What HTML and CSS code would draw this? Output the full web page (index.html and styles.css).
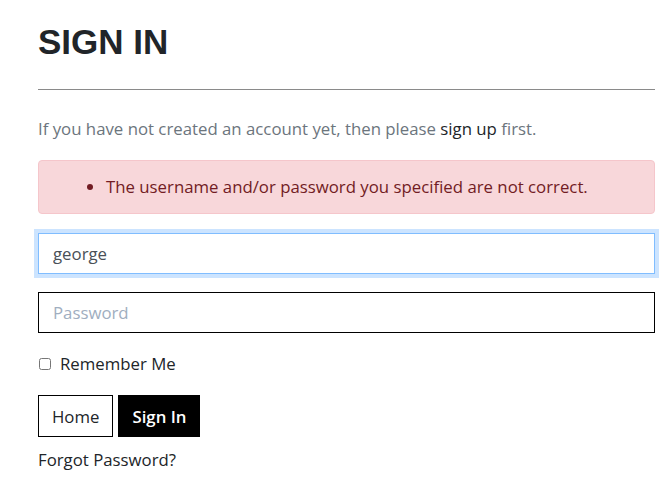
FILE: index.html
```html
<!DOCTYPE html>
<html>
<head>
<meta charset="utf-8">
<link rel="stylesheet" href="styles.css">
</head>
<body>
<main class="page">
  <h1 class="title">SIGN IN</h1>
  <hr class="rule">
  <p class="intro">If you have not created an account yet, then please <a class="link" href="#">sign up</a> first.</p>
  <div class="alert">
    <ul class="alert-list">
      <li>The username and/or password you specified are not correct.</li>
    </ul>
  </div>
  <form class="form">
    <input class="field field-focus" type="text" value="george">
    <input class="field" type="password" placeholder="Password">
    <label class="remember"><input class="check" type="checkbox"> Remember Me</label>
    <div class="actions">
      <a class="btn btn-light" href="#">Home</a>
      <button class="btn btn-dark" type="button">Sign In</button>
    </div>
    <a class="forgot" href="#">Forgot Password?</a>
  </form>
</main>
</body>
</html>
```
FILE: styles.css
```css
* { box-sizing: border-box; }
html, body { margin: 0; background: #fff; }
body {
  font-family: "Open Sans", "Noto Sans", sans-serif;
  font-size: 16.8px;
  color: #212529;
}
.page {
  width: 617px;
  margin-left: 38px;
  padding-top: 21px;
}
.title {
  font-family: "Liberation Sans", Arial, sans-serif;
  font-weight: bold;
  font-size: 35px;
  line-height: 42px;
  margin: 0;
  color: #212529;
}
.rule {
  margin: 26px 0 0;
  border: 0;
  border-top: 1px solid #8a8a8a;
  height: 0;
}
.intro {
  margin: 27px 0 0;
  line-height: 24px;
  color: #6c757d;
}
.link { color: #212529; text-decoration: none; }
.alert {
  margin-top: 19px;
  height: 54px;
  background: #f8d7da;
  border: 1px solid #f5c6cb;
  border-radius: 4px;
  color: #721c24;
  display: flex;
  align-items: center;
}
.alert-list {
  margin: 0;
  padding-left: 67px;
  line-height: 24px;
}
.form {
  margin-top: 19px;
  display: flex;
  flex-direction: column;
  align-items: flex-start;
}
.field {
  width: 617px;
  height: 41px;
  border: 1px solid #000;
  border-radius: 0;
  padding: 0 14px;
  font: inherit;
  color: #495057;
  outline: none;
  margin: 0 0 18px;
}
.field::placeholder { color: #a0aec0; }
.field-focus {
  border-color: #80bdff;
  box-shadow: 0 0 0 4px #cce4ff;
}
.remember {
  display: flex;
  align-items: center;
  gap: 9px;
  line-height: 24px;
  margin-top: 1px;
}
.check { margin: 0 0 0 1px; width: 12px; height: 12px; }
.actions {
  display: flex;
  gap: 5px;
  margin-top: 19px;
}
.btn {
  height: 42px;
  padding: 0 13px;
  font: inherit;
  display: flex;
  align-items: center;
  text-decoration: none;
  border: 1px solid #000;
  border-radius: 0;
}
.btn-light { background: #fff; color: #212529; }
.btn-dark { background: #000; color: #fff; font-weight: 600; }
.forgot {
  margin-top: 11px;
  color: #212529;
  text-decoration: none;
  line-height: 24px;
}
```
